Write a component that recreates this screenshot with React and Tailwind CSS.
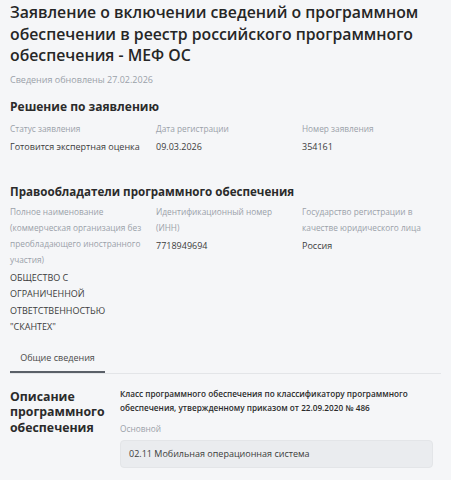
export default function App() {
  const font = { fontFamily: '"Open Sans", "Noto Sans", sans-serif' };
  return (
    <div className="min-h-[480px] w-[451px] bg-[#f5f6f8] px-[10px] pt-[2px] text-[#2b2b2b]" style={font}>
      <h1 className="text-[15.8px] font-semibold leading-[21.5px] text-[#262626]">
        Заявление о включении сведений о программном обеспечении в реестр российского программного обеспечения - МЕФ ОС
      </h1>
      <p className="mt-[6.5px] text-[9px] leading-[13px] text-[#9aa1a9]">Сведения обновлены 27.02.2026</p>

      <h2 className="mt-[12px] text-[12px] font-bold leading-[17px]">Решение по заявлению</h2>
      <div className="mt-[7.5px] grid grid-cols-[146px_146px_1fr]">
        <div className="pr-[10px]">
          <p className="text-[8.3px] leading-[12px] text-[#9aa1a9]">Статус заявления</p>
          <p className="mt-[5.5px] text-[9px] leading-[13px] text-[#3c3c3c]">Готовится экспертная оценка</p>
        </div>
        <div className="pr-[10px]">
          <p className="text-[8.3px] leading-[12px] text-[#9aa1a9]">Дата регистрации</p>
          <p className="mt-[5.5px] text-[9px] leading-[13px] text-[#3c3c3c]">09.03.2026</p>
        </div>
        <div>
          <p className="text-[8.3px] leading-[12px] text-[#9aa1a9]">Номер заявления</p>
          <p className="mt-[5.5px] text-[9px] leading-[13px] text-[#3c3c3c]">354161</p>
        </div>
      </div>

      <h2 className="mt-[30px] text-[11.6px] font-bold leading-[17px]">Правообладатели программного обеспечения</h2>
      <div className="mt-[3.5px] grid grid-cols-[146px_146px_1fr]">
        <div className="pr-[10px]">
          <p className="text-[8.3px] leading-[16px] text-[#9aa1a9]">
            Полное наименование (коммерческая организация без преобладающего иностранного участия)
          </p>
          <p className="mt-[2px] pr-[30px] text-[9px] leading-[16.5px] text-[#3c3c3c]">
            ОБЩЕСТВО С ОГРАНИЧЕННОЙ ОТВЕТСТВЕННОСТЬЮ "СКАНТЕХ"
          </p>
        </div>
        <div className="pr-[10px]">
          <p className="text-[8.3px] leading-[16px] text-[#9aa1a9]">Идентификационный номер (ИНН)</p>
          <p className="mt-[2px] text-[9px] leading-[16.5px] text-[#3c3c3c]">7718949694</p>
        </div>
        <div>
          <p className="text-[8.3px] leading-[16px] text-[#9aa1a9]">Государство регистрации в качестве юридического лица</p>
          <p className="mt-[2px] text-[9px] leading-[16.5px] text-[#3c3c3c]">Россия</p>
        </div>
      </div>

      <div className="mt-[15.5px] flex border-b border-[#e3e5e8]">
        <div className="w-[95px] border-b-2 border-[#5a6068] pb-[6.5px] text-center text-[9px] leading-[13px] text-[#4a4a4a]">
          Общие сведения
        </div>
      </div>

      <div className="mt-[13px] flex items-start">
        <h3 className="mt-[2px] w-[110px] text-[12.3px] font-bold leading-[15.5px]">Описание программного обеспечения</h3>
        <div className="flex-1">
          <p className="text-[8.2px] font-semibold leading-[14px] text-[#2b2b2b]">
            Класс программного обеспечения по классификатору программного обеспечения, утвержденному приказом от 22.09.2020 № 486
          </p>
          <p className="mt-[7.5px] text-[8.3px] leading-[13px] text-[#9aa1a9]">Основной</p>
          <div className="mt-[4.5px] mr-[8px] rounded-[4px] border border-[#e3e5e8] bg-[#eaecef] px-[8px] py-[6.5px] text-[9px] leading-[13px] text-[#3c3c3c]">
            02.11 Мобильная операционная система
          </div>
        </div>
      </div>
    </div>
  );
}
